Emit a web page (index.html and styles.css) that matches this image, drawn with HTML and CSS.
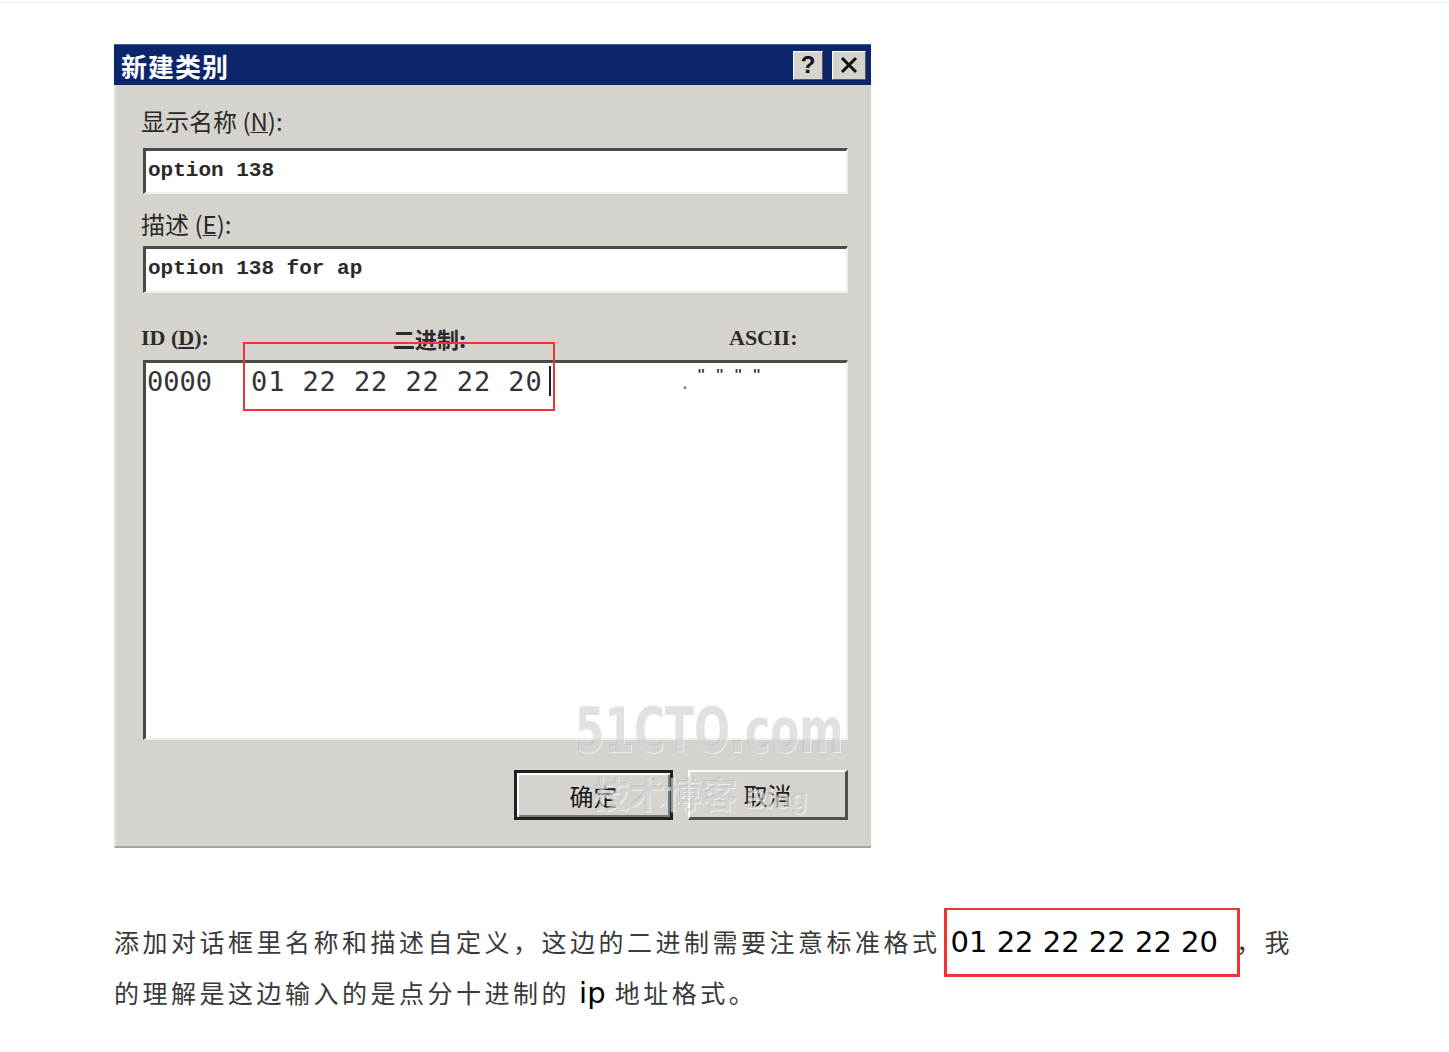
FILE: index.html
```html
<!DOCTYPE html>
<html lang="zh-CN">
<head>
  <meta charset="UTF-8">
  <meta name="viewport" content="width=device-width, initial-scale=1.0">
  <title>新建类别</title>
  <link rel="stylesheet" href="styles.css">
</head>
<body>
  <div class="topline"></div>
  <div class="article">
    <div class="dialog">
      <div class="titlebar">
        <span class="title">新建类别</span>
        <div class="title-buttons">
          <span class="tbtn help">?</span>
          <span class="tbtn close">
            <svg width="18" height="18" viewBox="0 0 18 18"><path d="M2 2 L16 16 M16 2 L2 16" stroke="#111" stroke-width="3"/></svg>
          </span>
        </div>
      </div>
      <div class="dialog-body">
        <div class="label first">显示名称 (<u>N</u>):</div>
        <div class="field">option 138</div>
        <div class="label second">描述 (<u>E</u>):</div>
        <div class="field">option 138 for ap</div>

        <div class="hex-head">
          <span class="col-id">ID (<u>D</u>):</span>
          <span class="col-bin">二进制:</span>
          <span class="col-ascii">ASCII:</span>
        </div>
        <div class="hexbox">
          <div class="hex-row">
            <span class="hex-id">0000</span>
            <span class="hex-bin">01 22 22 22 22 20</span>
            <span class="caret"></span>
            <span class="hex-ascii"><span class="dot">.</span>""""</span>
          </div>
        </div>

        <div class="buttons">
          <span class="btn default">确定</span>
          <span class="btn">取消</span>
        </div>
      </div>

      <div class="mark-box"></div>
      <div class="watermark">
        <div class="wm-big">51CTO.com</div>
        <div class="wm-small">技术博客 <span>Blog</span></div>
      </div>
    </div>

    <p class="note">添加对话框里名称和描述自定义，这边的二进制需要注意标准格式<span class="boxed">01 22 22 22 22 20</span>，我的理解是这边输入的是点分十进制的 <span class="latin">ip</span> 地址格式。</p>
  </div>
</body>
</html>
```

FILE: styles.css
```css
body {
  margin: 0;
  background: #ffffff;
  font-family: "Noto Sans CJK SC", "Noto Sans", sans-serif;
}
.topline {
  height: 1px;
  margin-top: 2px;
  background: #ececec;
}
.article {
  padding: 41px 0 0 114px;
}

/* dialog screenshot */
.dialog {
  position: relative;
  width: 757px;
  height: 804px;
  box-sizing: border-box;
  background: #d6d3ce;
  border-left: 2px solid #e4e2de;
  border-bottom: 2px solid #a4a29e;
}
.titlebar {
  height: 41px;
  background: #0c266c;
  display: flex;
  align-items: center;
  justify-content: space-between;
  padding: 0 5px 0 7px;
  border-top: 1px solid #4a5c90;
  box-sizing: border-box;
  margin-left: -2px;
}
.title {
  color: #ffffff;
  font-size: 26px;
  font-weight: 700;
  letter-spacing: 1px;
}
.title-buttons {
  display: flex;
  gap: 9px;
}
.tbtn {
  width: 30px;
  height: 29px;
  background: #d6d3ce;
  border-top: 1px solid #ffffff;
  border-left: 1px solid #ffffff;
  border-right: 1px solid #5a5a5a;
  border-bottom: 1px solid #5a5a5a;
  display: flex;
  align-items: center;
  justify-content: center;
  box-sizing: border-box;
}
.tbtn.close {
  width: 34px;
}
.help {
  font-family: "Liberation Sans", sans-serif;
  font-weight: 700;
  font-size: 24px;
  color: #111;
}

.dialog-body {
  padding: 21px 23px 0 25px;
}
.label {
  font-size: 24px;
  line-height: 30px;
  color: #2b2b2b;
  height: 30px;
}
.label u {
  text-decoration-thickness: 1px;
}
.label.second {
  margin-top: 15px;
}
.field {
  margin: 12px 0 0 2px;
  height: 46px;
  box-sizing: border-box;
  background: #ffffff;
  border-top: 3px solid #4a4a4a;
  border-left: 3px solid #4a4a4a;
  border-right: 2px solid #f0efed;
  border-bottom: 2px solid #f0efed;
  font-family: "Liberation Mono", monospace;
  font-weight: 700;
  font-size: 21px;
  line-height: 40px;
  padding-left: 2px;
  color: #2a2a2a;
}
.label.second + .field {
  margin-top: 7px;
  height: 47px;
}

.hex-head {
  display: flex;
  margin-top: 30px;
  height: 30px;
  font-size: 22px;
  line-height: 30px;
  color: #2b2b2b;
}
.col-id {
  width: 252px;
  font-family: "Liberation Serif", serif;
  font-weight: 700;
}
.col-bin {
  width: 336px;
  font-weight: 700;
}
.col-ascii {
  font-family: "Liberation Serif", serif;
  font-weight: 700;
}
.hexbox {
  margin: 7px 0 0 2px;
  height: 380px;
  box-sizing: border-box;
  background: #ffffff;
  border-top: 3px solid #4a4a4a;
  border-left: 3px solid #4a4a4a;
  border-right: 2px solid #f0efed;
  border-bottom: 2px solid #f0efed;
}
.hex-row {
  display: flex;
  align-items: flex-start;
  padding: 2px 0 0 1px;
  font-family: "DejaVu Sans Mono", monospace;
  font-size: 27px;
  line-height: 34px;
  color: #333;
}
.hex-id {
  width: 104px;
}
.hex-bin {
  letter-spacing: 0.9px;
}
.caret {
  width: 2px;
  height: 30px;
  margin: 1px 0 0 6px;
  background: #222;
}
.hex-ascii {
  position: relative;
  margin-left: 130px;
  font-size: 14px;
  letter-spacing: 10px;
  font-weight: 700;
  color: #333;
  line-height: 18px;
}
.hex-ascii .dot {
  position: relative;
  top: 10px;
  color: #777;
  margin-right: -2px;
}

.buttons {
  display: flex;
  justify-content: flex-end;
  gap: 15px;
  margin-top: 30px;
}
.btn {
  width: 160px;
  height: 50px;
  box-sizing: border-box;
  display: flex;
  align-items: center;
  justify-content: center;
  font-size: 24px;
  color: #1a1a1a;
  background: #d6d3ce;
  border-top: 2px solid #ffffff;
  border-left: 2px solid #ffffff;
  border-right: 3px solid #505050;
  border-bottom: 3px solid #505050;
}
.btn.default {
  width: 159px;
  border: 3px solid #202020;
  box-shadow: inset 2px 2px 0 #ffffff, inset -2px -2px 0 #7a7a7a;
}

/* annotation + watermark over the screenshot */
.mark-box {
  position: absolute;
  left: 127px;
  top: 298px;
  width: 312px;
  height: 69px;
  box-sizing: border-box;
  border: 2px solid #ee3535;
}
.watermark {
  position: absolute;
  left: 459px;
  top: 654px;
  width: 272px;
  color: rgba(140, 140, 140, 0.26);
  text-shadow: 1px 1px 0 rgba(255, 255, 255, 0.6);
  pointer-events: none;
}
.wm-big {
  font-family: "DejaVu Sans Condensed", "DejaVu Sans", sans-serif;
  font-weight: 700;
  font-size: 62px;
  line-height: 66px;
  transform: scaleX(0.76);
  transform-origin: left center;
  white-space: nowrap;
}
.wm-small {
  margin: 4px 0 0 18px;
  font-size: 36px;
  line-height: 48px;
  font-weight: 700;
  white-space: nowrap;
}
.wm-small span {
  font-family: "Liberation Sans", sans-serif;
  font-size: 28px;
}

/* paragraph under the picture */
.note {
  width: 1190px;
  margin: 68px 0 0 0;
  font-size: 25px;
  line-height: 50px;
  letter-spacing: 3.5px;
  color: #3a3a3a;
}
.boxed {
  margin-left: 3px;
  margin-right: -4px;
  padding: 15px 19px 15px 4px;
  border: 3px solid #ee3535;
  border-top-width: 2px;
  font-family: "DejaVu Sans", sans-serif;
  font-size: 29px;
  letter-spacing: 0;
  color: #000;
}
.latin {
  font-family: "DejaVu Sans", sans-serif;
  font-size: 29px;
  letter-spacing: 0;
  color: #000;
}
```
